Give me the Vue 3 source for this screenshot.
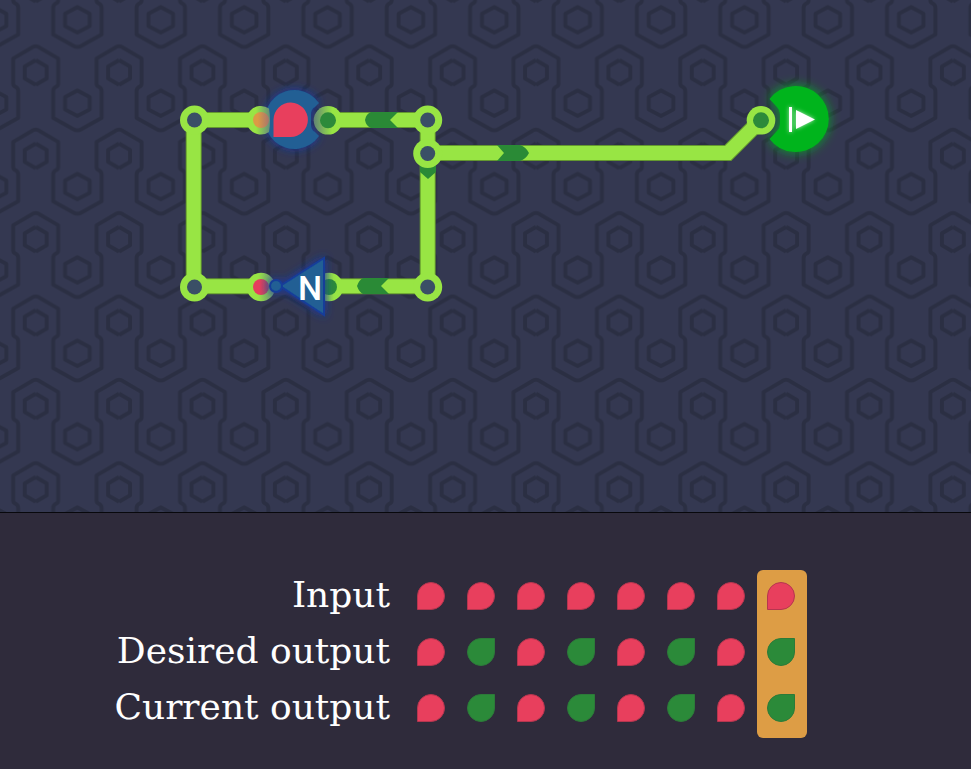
<script setup>
const nodes = [
  { x: 194.5, y: 120 },
  { x: 427.7, y: 120 },
  { x: 427.7, y: 153.5 },
  { x: 194.5, y: 287 },
  { x: 427.7, y: 287 },
]

const rows = [
  { label: 'Input', values: [0, 0, 0, 0, 0, 0, 0, 0] },
  { label: 'Desired output', values: [0, 1, 0, 1, 0, 1, 0, 1] },
  { label: 'Current output', values: [0, 1, 0, 1, 0, 1, 0, 1] },
]
const currentStep = 7

const wires = [
  'M261 120H193.700V286.300H261',
  'M328 120H427.700V286.300H329',
  'M428 153H728L761 120',
]
</script>

<template>
  <main class="game">
    <svg class="board" role="img" aria-label="Circuit board">
      <defs>
        <pattern id="hexes" width="83.38" height="83.38" patternUnits="userSpaceOnUse" x="35.7" y="40.5">
          <g class="hex-lines">
            <g v-for="shift in [4.5, -78.88]" :key="shift" :transform="`translate(0 ${shift})`">
              <path d="M-4 2.6Q0 -.2 4 2.6L22.5 13.5V39Q22.500 41 20 42Q17.500 43.500 17.500 46V73L37.500 84Q41.700 86.500 45.900 84L65.900 73V46Q65.900 43.500 63.400 42Q60.900 41 60.900 39V13.5L79.400 2.600Q83.400 -.2 87.400 2.600" />
              <path d="M0 15.2L11 21.5V33.500L0 39.800M83.400 15.200L72.400 21.500V33.500L83.400 39.800" />
              <path d="M41.700 45.500L54 52V64.500L41.700 71L29.400 64.500V52Z" />
            </g>
          </g>
        </pattern>
        <linearGradient id="port-left">
          <stop offset="0.4" stop-color="#98e544" />
          <stop offset="1" stop-color="#668b7b" />
        </linearGradient>
        <linearGradient id="port-right">
          <stop offset="0" stop-color="#618375" />
          <stop offset="0.65" stop-color="#98e544" />
        </linearGradient>
        <linearGradient id="signal-orange">
          <stop offset="0.3" stop-color="#dc9a45" />
          <stop offset="1" stop-color="#a8756c" />
        </linearGradient>
        <linearGradient id="signal-red">
          <stop offset="0.4" stop-color="#e63e5d" />
          <stop offset="1" stop-color="#8b4f70" />
        </linearGradient>
        <filter id="blue-glow" x="-50%" y="-50%" width="200%" height="200%">
          <feDropShadow dx="0" dy="0" stdDeviation="5" flood-color="#1738a5" flood-opacity="1" />
        </filter>
        <filter id="green-glow" x="-50%" y="-50%" width="200%" height="200%">
          <feDropShadow dx="0" dy="0" stdDeviation="6" flood-color="#00b41f" flood-opacity="0.9" />
        </filter>
        <filter id="white-glow" x="-50%" y="-50%" width="200%" height="200%">
          <feDropShadow dx="0" dy="0" stdDeviation="2" flood-color="#fff" flood-opacity="0.7" />
        </filter>
      </defs>

      <rect class="ground" width="100%" height="100%" />
      <rect width="100%" height="100%" fill="url(#hexes)" />

      <path v-for="d in wires" :key="'e' + d" class="wire-edge" :d="d" />
      <path v-for="d in wires" :key="d" class="wire" :d="d" />

      <g class="pulse">
        <path d="M365 120Q366 114 371 112H398L390 120L398 128H371Q366 126 365 120Z" />
        <path d="M357 286Q359 280 363 278H389L381 286L389 294H363Q359 292 357 286Z" />
        <path d="M497 145H520Q526 147 529 153Q526 159 520 161H497L504 153Z" />
        <path d="M420 160H436V172L428 179L420 172Z" />
      </g>

      <g v-for="n in nodes" :key="n.x + '-' + n.y">
        <circle class="node" :cx="n.x" :cy="n.y" r="14.500" />
        <circle class="hole" :cx="n.x" :cy="n.y" r="7.500" />
      </g>

      <!-- source gate -->
      <path class="gate" filter="url(#blue-glow)" d="M319 103A29.500 29.500 0 1 0 319 136L315 132Q311 130 311 125V114Q311 109 315 107Z" />
      <path fill="url(#port-left)" d="M269 108.500A14.300 14.300 0 1 0 269 132Q271 120 269 108.500Z" />
      <circle cx="261" cy="120" r="8" fill="url(#signal-orange)" />
      <path class="red" d="M273.500 137V119.500A17.200 17.200 0 1 1 290.500 137Z" />
      <circle cx="328" cy="120.300" r="14.300" fill="url(#port-right)" />
      <circle class="green" cx="328" cy="120.300" r="8" />

      <!-- inverter gate -->
      <circle cx="261" cy="287" r="14.300" fill="url(#port-left)" />
      <circle cx="261" cy="287" r="8" fill="url(#signal-red)" />
      <circle cx="329" cy="287" r="14.300" fill="url(#port-right)" />
      <circle class="green" cx="329" cy="287" r="8" />
      <g class="gate inverter" filter="url(#blue-glow)">
        <path d="M280 286L324 258V315Z" />
        <circle cx="276" cy="286" r="6" />
      </g>
      <text class="gate-name" x="310" y="300">N</text>

      <!-- output gate -->
      <path class="output" filter="url(#green-glow)" d="M769.500 99A33 33 0 1 1 769.500 139L777 131Q780 128 780 124V114Q780 110 777 107Z" />
      <g class="play" filter="url(#white-glow)">
        <path d="M789 107H792V132H789ZM796 110L815 119.500L796 129Z" />
      </g>
      <circle class="node" cx="761" cy="120.300" r="14.300" />
      <circle class="green" cx="761" cy="120.300" r="8" />
    </svg>

    <section class="panel">
      <table>
        <tbody>
          <tr v-for="row in rows" :key="row.label">
            <th scope="row">{{ row.label }}</th>
            <td v-for="(value, i) in row.values" :key="i" :class="{ current: i === currentStep }">
              <span class="drop" :class="value ? 'on' : 'off'"></span>
            </td>
          </tr>
        </tbody>
      </table>
    </section>
  </main>
</template>

<style>
body {
  background: #2f2b3b;
}
</style>

<style scoped>
.game {
  display: flex;
  flex-direction: column;
  min-height: 100vh;
}
.board {
  display: block;
  width: 100%;
  height: 512px;
}
.ground {
  fill: #343851;
}
.hex-lines {
  fill: none;
  stroke: #2b2f43;
  stroke-width: 4;
  stroke-linejoin: round;
}
.wire,
.wire-edge {
  fill: none;
  stroke: #98e544;
  stroke-width: 14;
}
.wire-edge {
  stroke: #64982f;
  stroke-width: 16;
}
.pulse {
  fill: #2a8a36;
}
.node {
  fill: #98e544;
}
.hole {
  fill: #3a4f66;
}
.green {
  fill: #2c8a3a;
}
.red {
  fill: #e83f5d;
}
.gate {
  fill: #205e94;
}
.inverter {
  stroke: #183d99;
  stroke-width: 2;
}
.gate-name {
  fill: #fff;
  font: 500 34px Roboto, sans-serif;
  text-anchor: middle;
}
.output {
  fill: #00b41f;
}
.play {
  fill: #fff;
}
.panel {
  flex: 1;
  padding: 57px 100px 31px;
  border-top: 1px solid #08080c;
  background: #2f2b3b;
}
table {
  border-collapse: separate;
  border-spacing: 0;
}
tr {
  height: 56px;
}
th {
  width: 290px;
  padding: 0 17px 6px 0;
  color: #fff;
  font: 400 36px/50px "DejaVu Serif", serif;
  text-align: right;
  white-space: nowrap;
}
td {
  width: 50px;
  padding: 0 2px 4px 0;
  box-sizing: border-box;
}
.current {
  background: #dd9d45;
}
tr:first-child .current {
  border-radius: 6px 6px 0 0;
}
tr:last-child .current {
  border-radius: 0 0 6px 6px;
}
.drop {
  display: block;
  width: 28px;
  height: 28px;
  margin: 0 auto;
  box-sizing: border-box;
  border: 1px solid;
}
.off {
  border-color: #b5364f;
  border-radius: 50% 50% 50% 0;
  background: #e83f5d;
}
.on {
  border-color: #2c7a39;
  border-radius: 50% 0 50% 50%;
  background: #2b8a39;
}
</style>
